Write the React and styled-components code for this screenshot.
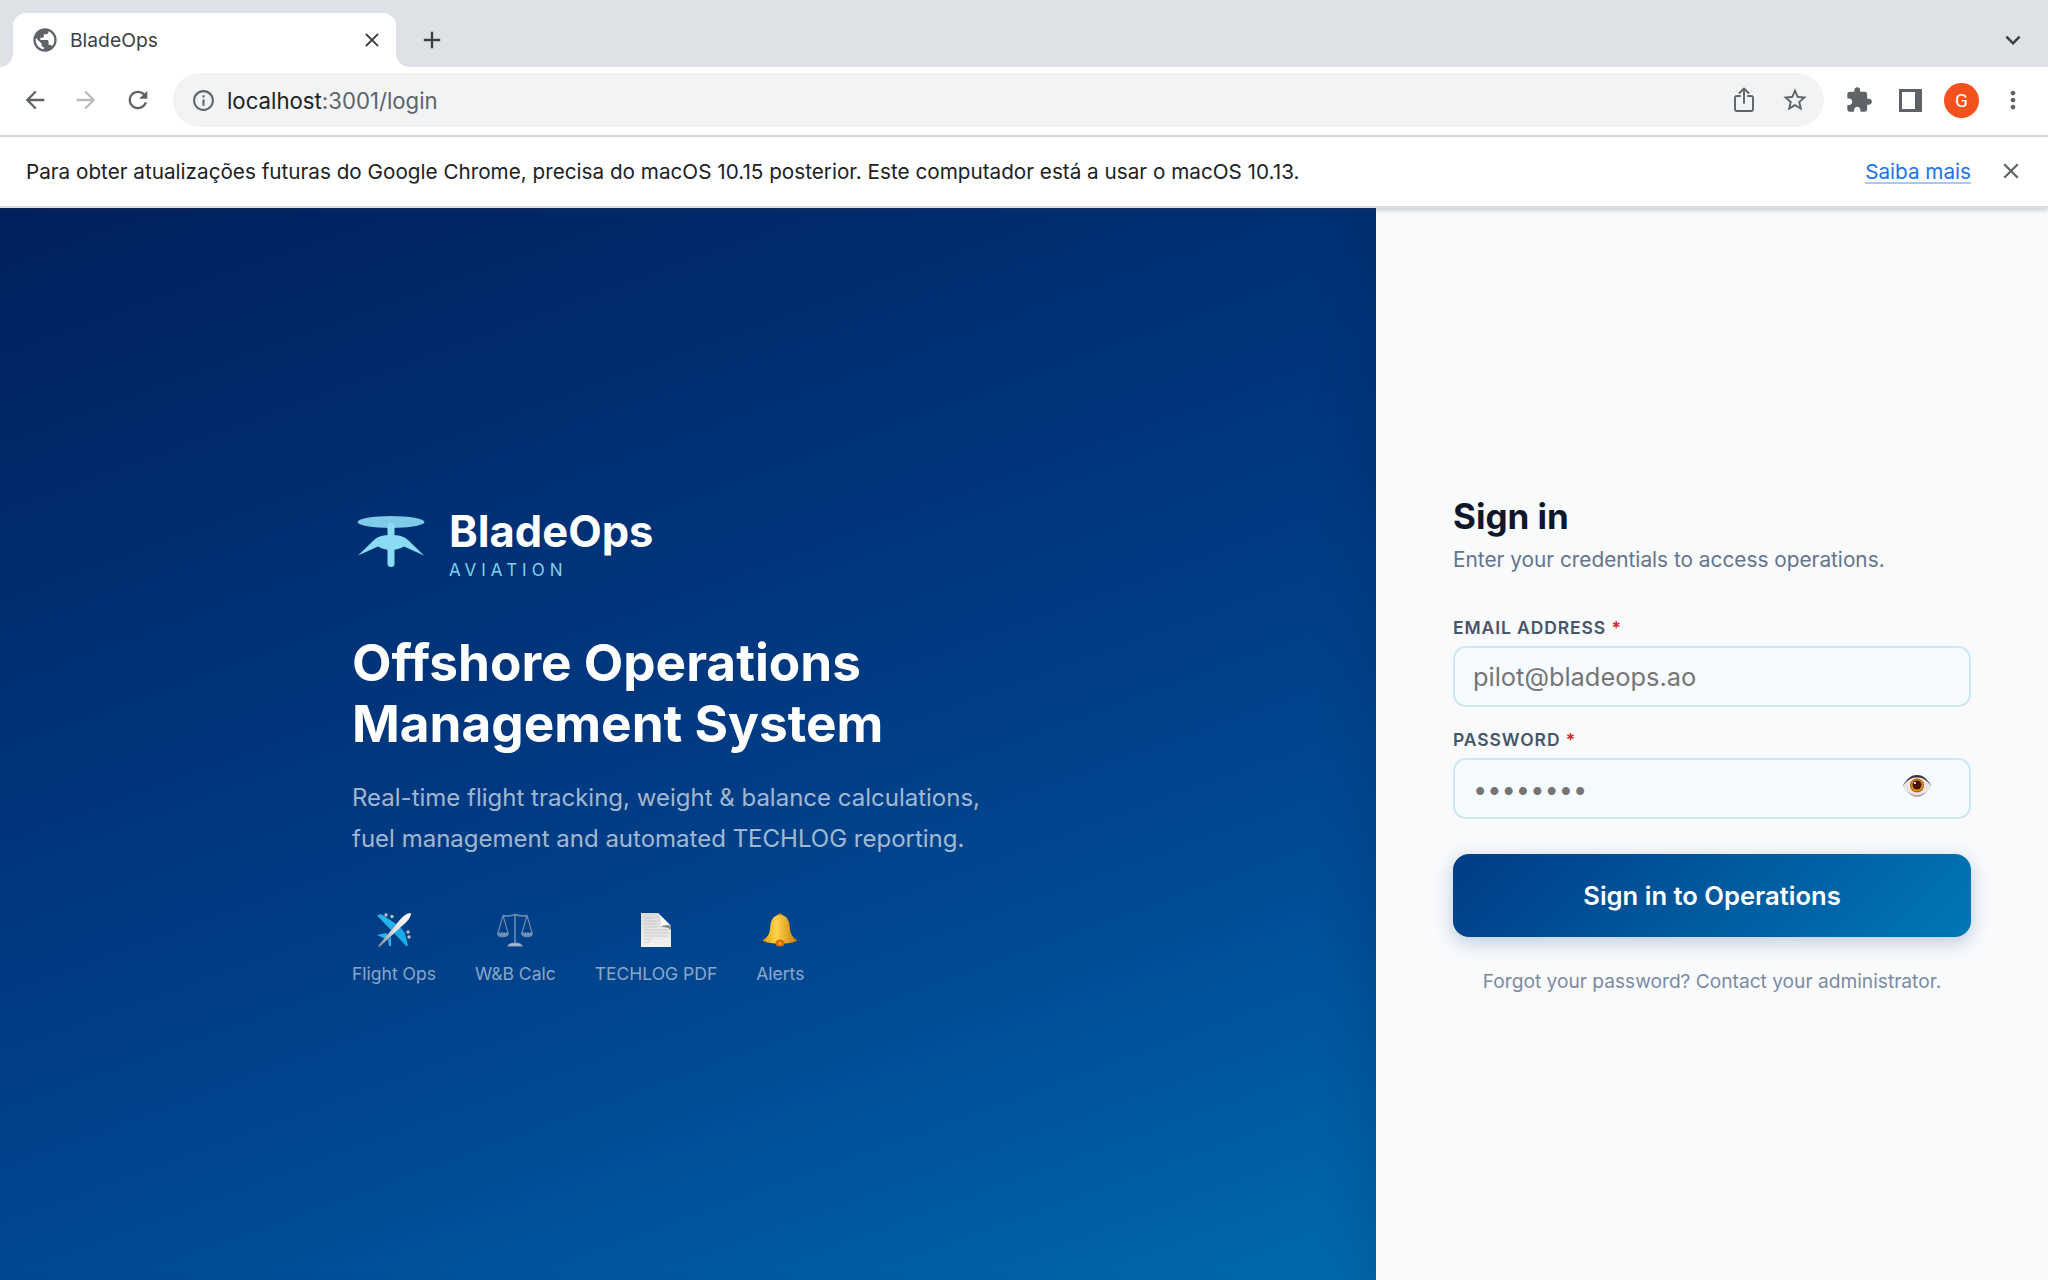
import React from 'react';
import styled, { createGlobalStyle } from 'styled-components';

const GlobalStyle = createGlobalStyle`
  html, body {
    margin: 0;
    height: 100%;
    overflow: hidden;
    font-family: Inter, "Liberation Sans", sans-serif;
  }
  * { box-sizing: border-box; }
`;

const Page = styled.div`
  display: flex;
  flex-direction: column;
  height: 100vh;
`;

const TabStrip = styled.div`
  display: flex;
  align-items: flex-end;
  height: 67px;
  padding: 0 20px 0 13px;
  background: #dee1e6;
  flex: none;
`;

const Tab = styled.div`
  position: relative;
  display: flex;
  align-items: center;
  width: 383px;
  height: 54px;
  padding: 0 16px 0 18px;
  background: #fff;
  border-radius: 13px 13px 0 0;
  color: #3c4043;
  font-size: 19.3px;

  &::before,
  &::after {
    content: '';
    position: absolute;
    bottom: 0;
    width: 13px;
    height: 13px;
    background: radial-gradient(circle at var(--cx) 0, #dee1e6 12.5px, #fff 13px);
  }
  &::before { left: -13px; --cx: 0; }
  &::after { right: -13px; --cx: 13px; }
`;

const TabTitle = styled.span`
  flex: 1;
  margin-left: 11px;
`;

const StripSlot = styled.div`
  display: flex;
  align-items: center;
  height: 54px;
  margin-left: ${(p) => (p.$grow ? 22 : 0)}px;
  flex: ${(p) => (p.$grow ? 1 : 'none')};
`;

const Toolbar = styled.div`
  display: flex;
  align-items: center;
  height: 70px;
  padding: 0 0 2px 21px;
  background: #fff;
  border-bottom: 2px solid #dadce0;
  flex: none;
`;

const NavButton = styled.div`
  display: flex;
  width: 28px;
  justify-content: center;
  margin-right: ${(p) => p.$gap}px;
  flex: none;
`;

const Omnibox = styled.div`
  display: flex;
  align-items: center;
  width: 1651px;
  height: 54px;
  padding: 0 15px 0 18px;
  background: #f1f3f4;
  border-radius: 27px;
  flex: none;
`;

const Url = styled.div`
  flex: 1;
  margin-left: 11px;
  font-size: 22.2px;
  color: #5f6368;

  b {
    font-weight: 400;
    color: #202124;
  }
`;

const OmniIcon = styled.div`
  display: flex;
  width: 28px;
  justify-content: center;
  margin-left: ${(p) => p.$gap}px;
`;

const ToolIcons = styled.div`
  display: flex;
  align-items: center;
  margin-left: 21px;
  gap: 21px;
`;

const SidePanelIcon = styled.svg`
  display: block;
  margin-left: 5px;
`;

const Avatar = styled.div`
  display: flex;
  align-items: center;
  justify-content: center;
  width: 35px;
  height: 35px;
  margin: 0 -1px 0 1px;
  border-radius: 50%;
  background: #f4511e;
  color: #fff;
  font-size: 19px;
  font-family: Roboto, sans-serif;
`;

const InfoBar = styled.div`
  position: relative;
  z-index: 2;
  display: flex;
  align-items: center;
  height: 71px;
  padding: 0 28px 1px 26px;
  background: #fff;
  border-bottom: 2px solid #dcdcdc;
  box-shadow: 0 2px 5px rgba(60, 64, 67, 0.25);
  font-size: 20.7px;
  color: #202124;
  flex: none;
`;

const InfoText = styled.div`
  flex: 1;
`;

const InfoLink = styled.a`
  margin-right: 31px;
  color: #1a73e8;
  text-decoration: underline;
  text-decoration-color: #a8c7fa;
  text-underline-offset: 3px;
`;

const Main = styled.div`
  display: flex;
  flex: 1;
  min-height: 0;
`;

const Hero = styled.section`
  display: flex;
  align-items: center;
  justify-content: center;
  width: 1376px;
  padding-top: 2px;
  background: linear-gradient(160deg, #00205e 0%, #003a82 50%, #004f99 76%, #006bae 100%);
  box-shadow: inset -50px 0 50px -40px rgba(0, 20, 60, 0.18);
  flex: none;
`;

const HeroInner = styled.div`
  width: 672px;
`;

const Brand = styled.div`
  display: flex;
  align-items: center;
  gap: 24px;
  margin-left: 5px;
`;

const BrandName = styled.div`
  color: #fff;
  font-size: 43.5px;
  font-weight: 700;
  line-height: 50px;
`;

const BrandSub = styled.div`
  margin-top: 4px;
  color: #7dd3f0;
  font-size: 17px;
  line-height: 20px;
  letter-spacing: 5px;
`;

const Headline = styled.h1`
  margin: 52px 0 0;
  color: #fff;
  font-size: 51.3px;
  font-weight: 700;
  line-height: 61px;
`;

const Lead = styled.p`
  margin: 23px 0 0;
  color: rgba(255, 255, 255, 0.65);
  font-size: 24px;
  line-height: 41px;
`;

const Features = styled.div`
  display: flex;
  gap: 39px;
  margin-top: 53px;
`;

const Feature = styled.div`
  display: flex;
  flex-direction: column;
  align-items: center;
  gap: 15px;
  color: rgba(255, 255, 255, 0.55);
  font-size: 17.5px;
  line-height: 22px;
`;

const Panel = styled.section`
  display: flex;
  flex: 1;
  flex-direction: column;
  justify-content: center;
  padding: 0 77px;
  background: #f8fafc;
`;

const Title = styled.h2`
  margin: 0;
  color: #0f172a;
  font-size: 35px;
  font-weight: 700;
  line-height: 44px;
`;

const Subtitle = styled.p`
  margin: 8px 0 0;
  color: #64748b;
  font-size: 20.8px;
  line-height: 28px;
`;

const Field = styled.div`
  margin-top: ${(p) => p.$top}px;
`;

const Label = styled.label`
  display: block;
  margin-bottom: 6.7px;
  color: #475569;
  font-size: 17.5px;
  font-weight: 600;
  line-height: 22px;
  letter-spacing: 0.9px;

  span { color: #dc2626; }
`;

const InputWrap = styled.div`
  position: relative;
`;

const Input = styled.input`
  display: block;
  width: 100%;
  height: 61px;
  padding: 0 18px;
  border: 2px solid #cfe5f4;
  border-radius: 13px;
  outline: none;
  background: #f6fbff;
  color: #757575;
  font-family: inherit;
  font-size: 25.4px;

  &::placeholder { color: #757575; opacity: 1; }
`;

const EyeButton = styled.div`
  position: absolute;
  top: 16px;
  right: 39px;
  display: flex;
`;

const Submit = styled.button`
  display: block;
  width: 100%;
  height: 83px;
  margin-top: 35px;
  border: none;
  border-radius: 16px;
  background: linear-gradient(135deg, #003c86 0%, #0077b6 100%);
  box-shadow: 0 5px 18px rgba(0, 61, 130, 0.25);
  color: #fff;
  font-family: inherit;
  font-size: 25.6px;
  font-weight: 600;
`;

const Forgot = styled.p`
  margin: 31px 0 0;
  color: #7b8aa3;
  font-size: 19.15px;
  line-height: 26px;
  text-align: center;
`;

const Icon = ({ d, size = 28, fill = '#5f6368' }) => (
  <svg width={size} height={size} viewBox="0 0 24 24" fill={fill} style={{ display: 'block' }}>
    <path d={d} fillRule="evenodd" />
  </svg>
);

const CloseIcon = ({ size = 18, color = '#3c4043' }) => (
  <svg width={size} height={size} viewBox="0 0 18 18" style={{ display: 'block', flex: 'none' }}>
    <path d="M3 3l12 12M15 3L3 15" stroke={color} strokeWidth="2.2" strokeLinecap="square" />
  </svg>
);

const PlaneEmoji = () => (
  <svg width="36" height="36" viewBox="0 0 36 36">
    <defs>
      <linearGradient id="planeBody" x1="0" y1="1" x2="1" y2="0">
        <stop offset="0" stopColor="#80858d" />
        <stop offset="0.5" stopColor="#dfe2e5" />
        <stop offset="1" stopColor="#ffffff" />
      </linearGradient>
    </defs>
    <path d="M1 3.500l4-1.500 15 10-5 6z" fill="#22b5ee" />
    <path d="M32 34h-2L18 21l6-6 5 6z" fill="#1aa9e6" />
    <path d="M1 23l9-2 3 4-3 2z M13 34l-1-6 3-3 0 9z" fill="#22b5ee" />
    <circle cx="10" cy="3" r="1.700" fill="#b9c0c7" />
    <circle cx="16" cy="4.500" r="1.700" fill="#b9c0c7" />
    <circle cx="32" cy="20" r="1.700" fill="#b9c0c7" />
    <circle cx="33" cy="25" r="1.700" fill="#b9c0c7" />
    <path d="M2 34L22 10c5-6 9-9 13-9 0 4-3 8-9 13L3.500 35z" fill="url(#planeBody)" />
  </svg>
);

const ScaleEmoji = () => (
  <svg width="36" height="36" viewBox="0 0 36 36" fill="none" stroke="#6f8bb0" strokeWidth="1.1">
    <path d="M18 2v29M6 3.500c4 1 8 .5 12-1 4 1.500 8 2 12 1" strokeWidth="1.600" />
    <path d="M6 3.500L1 21M6 3.500L11 21M30 3.500L25 21M30 3.500L35 21" />
    <path d="M0.500 21h11c-.5 5-10.500 5-11 0zM24.500 21h11c-.5 5-10.500 5-11 0z" fill="#9fb4cc" fillOpacity="0.7" />
    <path d="M11 34c1-2 3-3 7-3s6 1 7 3z" fill="#a9bed6" stroke="#8aa3c2" />
  </svg>
);

const DocEmoji = () => (
  <svg width="32" height="36" viewBox="0 0 32 36">
    <defs>
      <linearGradient id="docPage" x1="0" y1="0" x2="0" y2="1">
        <stop offset="0" stopColor="#d9d9d9" />
        <stop offset="1" stopColor="#f2f2f2" />
      </linearGradient>
    </defs>
    <path d="M1 1h17l13 13v21H1z" fill="url(#docPage)" />
    <path d="M18 1l13 13c-3-2-8-1-10 1 1-3 0-10-3-14z" fill="#fafafa" />
    <path d="M21 15c2-2 7-3 10-1v4c-3-3-7-3-10-3z" fill="#8a8a8a" />
    <path d="M4 6h10M4 9h12M4 12h13M4 15h13M4 18h24M4 21h24M4 24h24M4 27h8M4 30h6" stroke="#c4c4c4" strokeWidth="0.8" />
  </svg>
);

const BellEmoji = () => (
  <svg width="36" height="36" viewBox="0 0 36 36">
    <defs>
      <linearGradient id="bellGold" x1="0" y1="0" x2="1" y2="0">
        <stop offset="0" stopColor="#e89a0c" />
        <stop offset="0.4" stopColor="#ffd24a" />
        <stop offset="1" stopColor="#c97a08" />
      </linearGradient>
    </defs>
    <circle cx="18" cy="4" r="2.600" fill="#d68d0b" />
    <path d="M18 3c8 0 9.500 7 10 14 .4 5 3 9 7.500 11.500-4 2.500-11 3-17.500 3S4.500 31 .5 28.500C5 26 7.600 22 8 17 8.500 10 10 3 18 3z" fill="url(#bellGold)" />
    <ellipse cx="18" cy="31" rx="4.500" ry="3.500" fill="#d96f08" />
    <circle cx="18" cy="31.500" r="1.600" fill="#f3a63a" />
  </svg>
);

const EyeEmoji = () => (
  <svg width="30" height="24" viewBox="0 0 30 24">
    <path d="M0.500 12C5 4 10 1 15 1s10 3 14.500 11C25 20 20 23 15 23S5 20 .5 12z" fill="#efe4e4" />
    <path d="M0.500 12C5 4 10 1 15 1s10 3 14.500 11C24 5 20 3.500 15 3.500S6 5 .5 12z" fill="#3b3436" />
    <path d="M5 17c3 4 7 6 10 6s7-2 10-6c-3 2.500-7 4-10 4s-7-1.500-10-4z" fill="#b9a3a8" />
    <circle cx="15" cy="11.500" r="7" fill="#b8610a" />
    <circle cx="15" cy="11.500" r="5.800" fill="#e09a14" />
    <circle cx="15" cy="11" r="4.500" fill="#4a1205" />
    <circle cx="13" cy="9" r="1.100" fill="#fff" />
  </svg>
);

const LogoMark = () => (
  <svg width="68" height="54" viewBox="0 0 68 54">
    <ellipse cx="34" cy="6" rx="33.500" ry="6" fill="#7dcbe6" />
    <rect x="30.500" y="7" width="7" height="14" rx="3.500" fill="#8adcf5" />
    <path d="M1 39.500L17 24c4-4 10-5 17-5s13 1 17 5L67 39.500 47 30.500c-7 4.500-19 4.500-26 0z" fill="#8adcf5" />
    <rect x="30.500" y="30" width="7" height="21" rx="3.500" fill="#8adcf5" />
  </svg>
);

const features = [
  { label: 'Flight Ops', icon: <PlaneEmoji /> },
  { label: 'W&B Calc', icon: <ScaleEmoji /> },
  { label: 'TECHLOG PDF', icon: <DocEmoji /> },
  { label: 'Alerts', icon: <BellEmoji /> },
];

const App = () => (
  <Page>
    <GlobalStyle />
    <TabStrip>
      <Tab>
        <Icon size={28} d="M12 2C6.480 2 2 6.480 2 12s4.480 10 10 10 10-4.480 10-10S17.520 2 12 2zm-1 17.930c-3.950-.490-7-3.850-7-7.930 0-.620.080-1.210.210-1.790L9 15v1c0 1.100.900 2 2 2v1.930zm6.900-2.540c-.260-.810-1-1.390-1.900-1.390h-1v-3c0-.550-.450-1-1-1H8v-2h2c.550 0 1-.450 1-1V7h2c1.100 0 2-.900 2-2v-.410c2.930 1.190 5 4.060 5 7.410 0 2.080-.800 3.970-2.100 5.390z" />
        <TabTitle>BladeOps</TabTitle>
        <CloseIcon size={16} />
      </Tab>
      <StripSlot $grow>
        <Icon size={28} fill="#3c4043" d="M19 13h-6v6h-2v-6H5v-2h6V5h2v6h6v2z" />
      </StripSlot>
      <StripSlot>
        <Icon size={30} fill="#3c4043" d="M7.410 8.590L12 13.170l4.590-4.580L18 10l-6 6-6-6z" />
      </StripSlot>
    </TabStrip>
    <Toolbar>
      <NavButton $gap={23}>
        <Icon d="M20 11H7.830l5.590-5.590L12 4l-8 8 8 8 1.410-1.410L7.830 13H20v-2z" />
      </NavButton>
      <NavButton $gap={24}>
        <Icon fill="#b9bbbe" d="M4 13h12.170l-5.590 5.590L12 20l8-8-8-8-1.410 1.410L16.170 11H4v2z" />
      </NavButton>
      <NavButton $gap={21}>
        <Icon d="M17.650 6.350C16.200 4.900 14.210 4 12 4c-4.420 0-7.990 3.580-7.990 8s3.570 8 7.990 8c3.730 0 6.840-2.550 7.730-6h-2.080c-.820 2.330-3.040 4-5.650 4-3.310 0-6-2.690-6-6s2.690-6 6-6c1.660 0 3.140.690 4.220 1.780L13 11h7V4l-2.350 2.350z" />
      </NavButton>
      <Omnibox>
        <Icon size={25} d="M11 7h2v2h-2zm0 4h2v6h-2zm1-9C6.480 2 2 6.480 2 12s4.480 10 10 10 10-4.480 10-10S17.520 2 12 2zm0 18c-4.410 0-8-3.590-8-8s3.590-8 8-8 8 3.590 8 8-3.590 8-8 8z" />
        <Url><b>localhost</b>:3001/login</Url>
        <OmniIcon>
          <svg width="22" height="26" viewBox="0 0 22 26" fill="none" stroke="#5f6368" strokeWidth="1.9" strokeLinecap="round" strokeLinejoin="round">
            <path d="M7 9H4a2 2 0 0 0-2 2v11a2 2 0 0 0 2 2h14a2 2 0 0 0 2-2V11a2 2 0 0 0-2-2h-3M11 16V2M6.500 6L11 1.500 15.500 6" />
          </svg>
        </OmniIcon>
        <OmniIcon $gap={23}>
          <Icon d="M22 9.240l-7.190-.620L12 2 9.190 8.630 2 9.240l5.460 4.730L5.820 21 12 17.270 18.180 21l-1.630-7.030L22 9.240zM12 15.400l-3.760 2.270 1-4.280-3.320-2.880 4.380-.380L12 6.100l1.710 4.040 4.380.380-3.320 2.880 1 4.280L12 15.400z" />
        </OmniIcon>
      </Omnibox>
      <ToolIcons>
        <Icon d="M20.500 11H19V7c0-1.100-.900-2-2-2h-4V3.500C13 2.120 11.880 1 10.500 1S8 2.120 8 3.500V5H4c-1.100 0-1.990.900-1.990 2v3.800H3.500c1.490 0 2.700 1.210 2.700 2.700s-1.210 2.700-2.700 2.700H2V20c0 1.100.900 2 2 2h3.800v-1.500c0-1.490 1.210-2.700 2.700-2.700 1.490 0 2.700 1.210 2.700 2.700V22H17c1.100 0 2-.900 2-2v-4h1.500c1.380 0 2.500-1.120 2.500-2.500S21.880 11 20.500 11z" />
        <SidePanelIcon width="23" height="23" viewBox="0 0 23 23">
          <path d="M0 0h23v23H0z" fill="#5f6368" />
          <path d="M3 3h13v17H3z" fill="#fff" />
        </SidePanelIcon>
        <Avatar>G</Avatar>
        <Icon fill="#5f6368" d="M12 8c1.100 0 2-.900 2-2s-.900-2-2-2-2 .900-2 2 .900 2 2 2zm0 2c-1.100 0-2 .900-2 2s.900 2 2 2 2-.900 2-2-.900-2-2-2zm0 6c-1.100 0-2 .900-2 2s.900 2 2 2 2-.900 2-2-.900-2-2-2z" />
      </ToolIcons>
    </Toolbar>
    <InfoBar>
      <InfoText>Para obter atualizações futuras do Google Chrome, precisa do macOS 10.15 posterior. Este computador está a usar o macOS 10.13.</InfoText>
      <InfoLink>Saiba mais</InfoLink>
      <CloseIcon size={18} color="#5f6368" />
    </InfoBar>
    <Main>
      <Hero>
        <HeroInner>
          <Brand>
            <LogoMark />
            <div>
              <BrandName>BladeOps</BrandName>
              <BrandSub>AVIATION</BrandSub>
            </div>
          </Brand>
          <Headline>Offshore Operations<br />Management System</Headline>
          <Lead>Real-time flight tracking, weight &amp; balance calculations,<br />fuel management and automated TECHLOG reporting.</Lead>
          <Features>
            {features.map((f) => (
              <Feature key={f.label}>
                {f.icon}
                <span>{f.label}</span>
              </Feature>
            ))}
          </Features>
        </HeroInner>
      </Hero>
      <Panel>
        <Title>Sign in</Title>
        <Subtitle>Enter your credentials to access operations.</Subtitle>
        <Field $top={42.5}>
          <Label>EMAIL ADDRESS <span>*</span></Label>
          <InputWrap>
            <Input type="email" placeholder="pilot@bladeops.ao" />
          </InputWrap>
        </Field>
        <Field $top={22.3}>
          <Label>PASSWORD <span>*</span></Label>
          <InputWrap>
            <Input type="password" defaultValue="password" />
            <EyeButton><EyeEmoji /></EyeButton>
          </InputWrap>
        </Field>
        <Submit>Sign in to Operations</Submit>
        <Forgot>Forgot your password? Contact your administrator.</Forgot>
      </Panel>
    </Main>
  </Page>
);

export default App;
